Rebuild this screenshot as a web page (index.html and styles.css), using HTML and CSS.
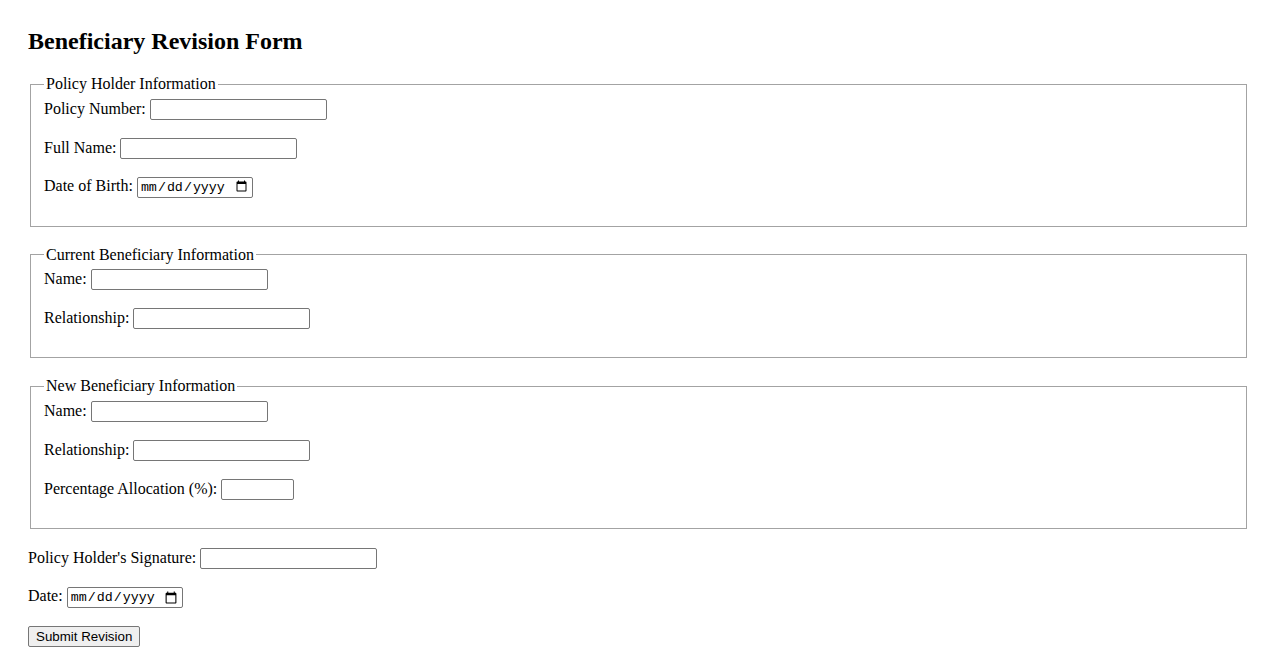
FILE: index.html
```html
<!DOCTYPE html>
<html lang="en">
<head>
<meta charset="utf-8">
<title>Beneficiary Revision Form</title>
<link rel="stylesheet" href="styles.css">
</head>
<body>
<div class="page">
  <h2 class="title">Beneficiary Revision Form</h2>
  <form class="form">
    <fieldset class="group">
      <legend class="group-legend">Policy Holder Information</legend>
      <div class="row"><label for="pn">Policy Number:</label> <input class="field" id="pn" type="text"></div>
      <div class="row"><label for="fn">Full Name:</label> <input class="field" id="fn" type="text"></div>
      <div class="row"><label for="dob">Date of Birth:</label> <input class="date" id="dob" type="date"></div>
    </fieldset>
    <fieldset class="group">
      <legend class="group-legend">Current Beneficiary Information</legend>
      <div class="row"><label for="cn">Name:</label> <input class="field" id="cn" type="text"></div>
      <div class="row"><label for="cr">Relationship:</label> <input class="field" id="cr" type="text"></div>
    </fieldset>
    <fieldset class="group">
      <legend class="group-legend">New Beneficiary Information</legend>
      <div class="row"><label for="nn">Name:</label> <input class="field" id="nn" type="text"></div>
      <div class="row"><label for="nr">Relationship:</label> <input class="field" id="nr" type="text"></div>
      <div class="row"><label for="pa">Percentage Allocation (%):</label> <input class="field small" id="pa" type="number"></div>
    </fieldset>
    <div class="row"><label for="sig">Policy Holder's Signature:</label> <input class="field" id="sig" type="text"></div>
    <div class="row"><label for="dt">Date:</label> <input class="date" id="dt" type="date"></div>
    <button class="submit" type="submit">Submit Revision</button>
  </form>
</div>
</body>
</html>
```

FILE: styles.css
```css
html, body {
  margin: 0;
  padding: 0;
  background: #ffffff;
}
body {
  font-family: "Liberation Serif", "Times New Roman", serif;
  font-size: 16px;
  color: #000000;
}
.page {
  padding: 28px 28px 20px 28px;
}
.title {
  font-size: 24px;
  font-weight: bold;
  margin: 0 0 20px 0;
  line-height: normal;
}
.form {
  margin: 0;
}
.group {
  margin: 0 3px 19px 2px;
  padding: 5.6px 13px 10px 13px;
  border: 1px solid #a3a3a3;
}
.group-legend {
  padding: 0 2px;
}
.row {
  margin: 0 0 18px 0;
}
.field,
.date {
  font-family: "Liberation Sans", Arial, sans-serif;
  font-size: 13.333px;
  box-sizing: border-box;
  height: 21px;
  border: 1px solid #767676;
  border-radius: 2px;
  padding: 1px 2px;
  vertical-align: baseline;
}
.field {
  width: 177px;
}
.field.small {
  width: 73px;
}
.date {
  font-family: "Liberation Mono", "Courier New", monospace;
  width: 116px;
}
.submit {
  font-family: "Liberation Sans", Arial, sans-serif;
  font-size: 13.333px;
  box-sizing: border-box;
  height: 21px;
  padding: 1px 7px;
  border: 1px solid #767676;
  border-radius: 2px;
  background: #efefef;
  color: #000000;
}
```
